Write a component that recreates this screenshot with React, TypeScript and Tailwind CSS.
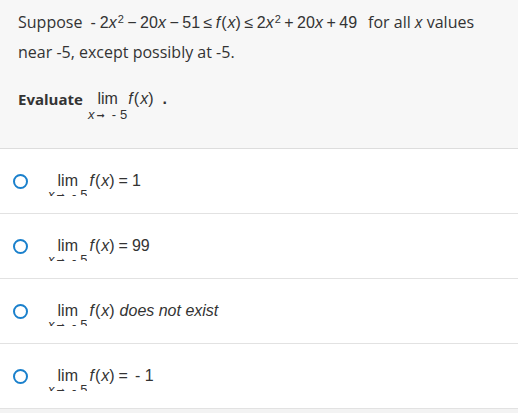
import React from "react";

const sans = { fontFamily: "'Open Sans', Lato, Arial, sans-serif" };
const math = "font-['Liberation_Sans',Arial,sans-serif]";

function Sub() {
  return (
    <>
      <span className="italic">x</span>
      <span className="font-['DejaVu_Sans',sans-serif] text-[10px] ml-[2px]">➞</span>
      <span className="ml-[7px]">-</span>
      <span className="ml-[4px]">5</span>
    </>
  );
}

function Lim({ clip }: { clip?: boolean }) {
  return (
    <span className="inline-flex flex-col items-center align-top">
      <span className="text-[16px] leading-[18px]">lim</span>
      <span
        className={
          "text-[13px] leading-[14px] whitespace-nowrap flex items-baseline " +
          (clip ? "h-[8px] -mt-[2px] overflow-hidden" : "")
        }
      >
        <Sub />
      </span>
    </span>
  );
}

function Op({ c, tight }: { c: string; tight?: boolean }) {
  return <span className={tight ? "mx-[3.5px]" : "mx-[4px]"}>{c}</span>;
}

function Radio() {
  return <span className="block w-[15px] h-[15px] rounded-full border-2 border-[#1a80cc] shrink-0" />;
}

function Fx() {
  return (
    <span className="leading-[18px]">
      <span className="italic">f</span>
      <span className="ml-[1px]">(</span>
      <span className="italic ml-[1px]">x</span>)
    </span>
  );
}

function Option({ children }: { children: React.ReactNode }) {
  return (
    <div className="h-[65px] border-b border-[#e2e2e2] flex items-start pl-[13px] pt-[25px] bg-white">
      <Radio />
      <div className={"ml-[20px] -mt-[2px] flex items-start text-[#333] text-[16px] leading-[18px] " + math}>
        <Lim clip />
        <span className="ml-[2px] leading-[18px]">
          <Fx />
        </span>
        {children}
      </div>
    </div>
  );
}

export default function App() {
  return (
    <div className="w-[518px] h-[413px] bg-[#f3f3f3] overflow-hidden">
      <div className="h-[149px] bg-[#f7f7f7] border-b border-[#dddddd] px-[18px] pt-[10px] text-[#333]">
        <div className="flex items-baseline text-[16px] h-[22px] whitespace-nowrap">
          <span style={sans}>Suppose</span>
          <span className={"ml-[8px] text-[16px] " + math}>
            -<span className="ml-[4px]">2</span>
            <span className="italic">x</span>
            <sup className="text-[11px] ml-[1px]">2</sup>
            <Op c="−" tight />
            20<span className="italic">x</span>
            <Op c="−" tight />
            51
            <Op c="≤" tight />
            <Fx />
            <Op c="≤" tight />
            2<span className="italic">x</span>
            <sup className="text-[11px] ml-[1px]">2</sup>
            <Op c="+" tight />
            20<span className="italic">x</span>
            <Op c="+" tight />
            49
          </span>
          <span style={sans} className="ml-[11px]">
            for all <span className="italic">x</span> values
          </span>
        </div>
        <div style={sans} className="mt-[9px] text-[16px] leading-[22px]">
          near -5, except possibly at -5.
        </div>
        <div className="mt-[27px] flex items-start">
          <span style={sans} className="font-bold text-[15px] leading-[18px]">
            Evaluate
          </span>
          <span className={"ml-[5px] flex items-start leading-[18px] " + math}>
            <Lim />
            <span className="ml-[1px] text-[16px] leading-[18px]">
              <Fx />
            </span>
            <span className="ml-[9px] font-bold text-[16px] leading-[18px]">.</span>
          </span>
        </div>
      </div>
      <Option>
        <Op c="=" />
        <span className="leading-[18px]">1</span>
      </Option>
      <Option>
        <Op c="=" />
        <span className="leading-[18px]">99</span>
      </Option>
      <Option>
        <span className="ml-[5px] leading-[18px] italic">does not exist</span>
      </Option>
      <Option>
        <Op c="=" />
        <span className="leading-[18px] ml-[3px]">- 1</span>
      </Option>
    </div>
  );
}
